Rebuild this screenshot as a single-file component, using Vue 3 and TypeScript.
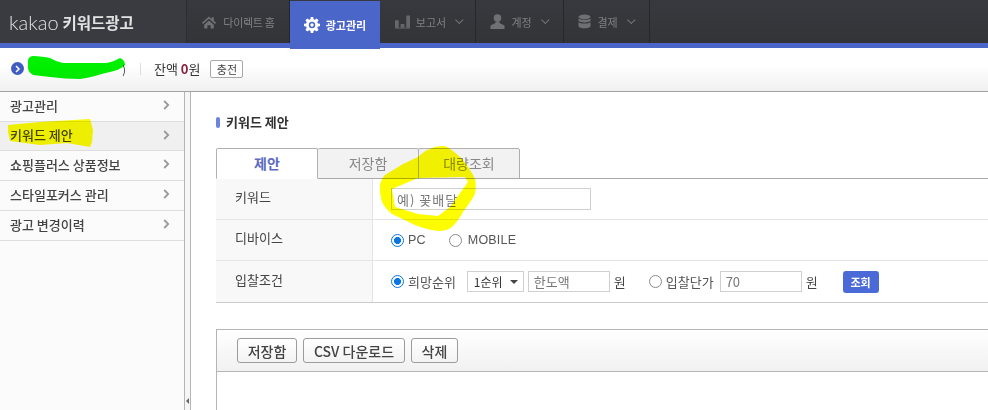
<script setup lang="ts">
const menu: string[] = ['광고관리', '키워드 제안', '쇼핑플러스 상품정보', '스타일포커스 관리', '광고 변경이력']
</script>

<template>
  <div class="page">
    <header class="top">
      <div class="logo"><span class="kakao">kakao</span><b>키워드광고</b></div>
      <nav class="nav">
        <a class="ni n1">
          <svg width="16" height="14" viewBox="0 0 20 16"><path d="M10 1 1 9l1.500 1.600L10 4l7.500 6.600L19 9l-3-2.700V2h-2.500v2.100z" fill="#6f7073"/><path d="M4 11.500 10 6l6 5.500V16h-4v-4H8v4H4z" fill="#6f7073"/></svg>
          다이렉트 홈
        </a>
        <a class="ni active">
          <svg width="16" height="16" viewBox="0 0 16 16"><path d="M6.800 0h2.400l.4 2.200 1.300.5L12.700 1.400l1.900 1.900-1.300 1.800.5 1.300 2.200.4v2.400l-2.200.4-.5 1.300 1.300 1.800-1.900 1.900-1.800-1.300-1.300.5-.4 2.200H6.800l-.4-2.200-1.300-.5-1.800 1.300-1.900-1.900 1.300-1.800-.5-1.300L0 9.200V6.800l2.200-.4.500-1.300-1.300-1.800 1.900-1.900 1.800 1.300 1.300-.5z" fill="#fff"/><circle cx="8" cy="8" r="3.200" fill="#4a66c8"/><circle cx="8" cy="8" r="1.700" fill="#fff"/></svg>
          광고관리
        </a>
        <a class="ni n3">
          <svg width="15" height="14" viewBox="0 0 16 14"><path d="M0 5h4v8H0zM6 9h4v4H6zM12 0h4v13h-4z" fill="#66676a"/><path d="M0 13.500h16" stroke="#66676a"/></svg>
          보고서 <i class="chev"></i>
        </a>
        <a class="ni n4">
          <svg width="15" height="15" viewBox="0 0 15 15"><circle cx="7.500" cy="4" r="3.800" fill="#6f7073"/><path d="M5.500 7.500h4v1.500l5 2.500V15H.5v-3.500l5-2.500z" fill="#6f7073"/></svg>
          계정 <i class="chev"></i>
        </a>
        <a class="ni n5">
          <svg width="13" height="15" viewBox="0 0 14 15"><ellipse cx="7" cy="2.500" rx="6.500" ry="2.500" fill="#6f7073"/><path d="M.5 4.200C2 6 12 6 13.500 4.200V7C12 9 2 9 .5 7zM.5 8.200C2 10 12 10 13.500 8.200V12.500C12 15.600 2 15.600 .5 12.500z" fill="#6f7073"/></svg>
          결제 <i class="chev"></i>
        </a>
      </nav>
    </header>

    <div class="account">
      <span class="dot"><svg width="6" height="8" viewBox="0 0 6 8"><path d="M1 1l3 3-3 3" fill="none" stroke="#fff" stroke-width="1.500"/></svg></span>
      <span class="acct">)</span>
      <span class="vr"></span>
      <span class="bal">잔액 <b>0</b>원</span>
      <button class="charge">충전</button>
    </div>

    <div class="body">
      <aside class="side">
        <a v-for="(m, i) in menu" :key="m" class="si" :class="{ on: i === 1 }">
          {{ m }}
          <svg width="7" height="10" viewBox="0 0 7 10"><path d="M1.200 1l4 4-4 4" fill="none" stroke="#9a9a9a" stroke-width="1.800"/></svg>
        </a>
      </aside>
      <div class="splitter"><i></i></div>
      <main class="main">
        <h2 class="title"><i></i>키워드 제안</h2>
        <div class="tabs">
          <a class="tab cur">제안</a>
          <a class="tab t2">저장함</a>
          <a class="tab t3">대량조회</a>
        </div>
        <div class="form">
          <div class="row">
            <div class="th">키워드</div>
            <div class="td"><input class="kw" placeholder="예) 꽃배달" /></div>
          </div>
          <div class="row">
            <div class="th">디바이스</div>
            <div class="td">
              <span class="radio sel"></span><span class="lab en">PC</span>
              <span class="radio r2"></span><span class="lab en mob">MOBILE</span>
            </div>
          </div>
          <div class="row">
            <div class="th">입찰조건</div>
            <div class="td">
              <span class="radio sel"></span><span class="lab">희망순위</span>
              <span class="sel-box">1순위<i></i></span>
              <input class="amt" placeholder="한도액" />
              <span class="won">원</span>
              <span class="radio r3"></span><span class="lab">입찰단가</span>
              <input class="amt a2" placeholder="70" />
              <span class="won">원</span>
              <button class="go">조회</button>
            </div>
          </div>
        </div>
        <div class="panel">
          <div class="bar">
            <button class="btn b1">저장함</button>
            <button class="btn b2">CSV 다운로드</button>
            <button class="btn b3">삭제</button>
          </div>
        </div>
      </main>
    </div>

    <svg class="scribble" width="988" height="410" viewBox="0 0 988 410">
      <path d="M28 60C29 57 31 56 33 56C39 56 45 57 50 58C54 60 58 62 63 63L107 63C112 62 116 60 120 58C123 59 125 62 125 65C121 69 115 71 110 72C100 74 90 78 80 79C70 79 60 78 50 77L33 75C30 73 28 71 28 68Z" fill="#00f000"/>
      <path d="M8 125 40 122 90 119 93 130 92 142 90 147 67 143 40 145 10 141 8 132Z" fill="#fdfd00"/>
      <path fill-rule="evenodd" fill="#fdfd00" d="M380 185C381 180 383 177 385 175L403 164 418 157C422 153 426 150 430 149C435 146 440 146 445 146C451 149 457 154 462 159C467 165 472 172 475 179C476 184 476 189 475 194C472 200 467 206 463 212C460 218 456 223 452 227C448 230 443 231 438 231C430 230 422 228 415 225L392 214C388 211 384 206 382 202C380 196 380 190 380 185ZM392 189L395 207 418 214 438 216 450 207 468 182 465 177 418 178Z"/>
    </svg>
  </div>
</template>

<style scoped>
.page { position: relative; width: 988px; height: 410px; overflow: hidden; background: #fff; font-family: "Noto Sans CJK KR", "Noto Sans", sans-serif; color: #333; font-size: 12px; }
.top { height: 48px; box-sizing: border-box; display: flex; background: #4a66c8; padding-bottom: 5px; }
.logo { width: 187px; flex: none; display: flex; align-items: center; gap: 4px; padding-left: 9px; box-sizing: border-box; color: #e2e2e2; background: #3a3b40; border-right: 1px solid #2c2d30; }
.kakao { font-family: "Lato", sans-serif; font-size: 20px; font-weight: 300; }
.logo b { font-size: 15.500px; font-weight: 700; }
.nav { flex: 1; display: flex; background: linear-gradient(#38393e, #333438); }
.ni { box-sizing: border-box; display: flex; align-items: center; justify-content: center; gap: 6px; color: #7f8084; font-size: 11px; border-right: 1px solid #26272a; }
.n1 { width: 103px; letter-spacing: -.3px; }
.active { width: 90px; height: 48px; color: #fff; font-weight: 700; background: #4a66c8; border-right: 0; margin-top: 1px; letter-spacing: 0; }
.n3 { width: 96px; padding-left: 3px; }
.n4 { width: 88px; }
.n5 { width: 86px; }
.chev { width: 5px; height: 5px; border-right: 1px solid #77787b; border-bottom: 1px solid #77787b; transform: rotate(45deg) translate(-2px, -1px); margin-left: 5px; }

.account { height: 44px; box-sizing: border-box; display: flex; align-items: center; padding: 0 0 2px 11px; background: linear-gradient(#fff 40%, #f0f0f0); border-bottom: 1px solid #a3a3a3; }
.dot { width: 13px; height: 13px; border-radius: 50%; background: #3f5cc0; display: flex; align-items: center; justify-content: center; }
.acct { width: 102px; text-align: right; font-size: 11px; }
.vr { width: 1px; height: 12px; background: #ddd; margin: 0 13px 0 14px; }
.bal { font-size: 13px; color: #333; }
.bal b { color: #8a1f3c; font-weight: 700; }
.charge { width: 33px; height: 18px; margin-left: 10px; padding: 0; border: 1px solid #a9a9a9; border-radius: 2px; background: #fff; font: 11px "Noto Sans CJK KR", sans-serif; color: #444; }

.body { display: flex; height: 318px; }
.side { width: 184px; flex: none; background: #fbfbfb; }
.si { height: 30px; box-sizing: border-box; display: flex; align-items: center; justify-content: space-between; padding: 0 14px 3px 10px; border-bottom: 1px solid #dedede; font-size: 13px; font-weight: 500; color: #444; }
.on { height: 29px; background: #f0f0f0; }
.splitter { width: 7px; flex: none; box-sizing: border-box; background: #f6f6f6; border-left: 1px solid #b5b5b5; border-right: 1px solid #b5b5b5; position: relative; }
.splitter i { position: absolute; left: 1px; top: 306px; border: 3px solid transparent; border-right-color: #666; border-left: 0; }
.main { flex: 1; padding-left: 25px; min-width: 0; }
.title { margin: 0; height: 56px; box-sizing: border-box; padding-top: 21px; display: flex; align-items: flex-start; font-size: 13px; line-height: 18px; font-weight: 700; color: #333; }
.title i { width: 4px; height: 11px; margin: 4px 6px 0 0; background: #6a84e0; border-radius: 2px; }
.tabs { display: flex; height: 30px; }
.tab { box-sizing: border-box; display: flex; align-items: center; justify-content: center; height: 31px; padding-bottom: 2px; border: 1px solid #b0b0b0; border-radius: 2px 2px 0 0; background: #f2f2f2; color: #888; font-size: 14px; position: relative; }
.cur { width: 102px; background: #fff; color: #5a6bc0; font-weight: 700; z-index: 1; border-bottom-color: #fff; }
.t2 { width: 101px; border-left: 0; }
.t3 { width: 102px; margin-left: -1px; }
.form { border-top: 1px solid #a9a9a9; border-bottom: 1px solid #ccc; position: relative; }
.row { display: flex; height: 41px; box-sizing: border-box; border-bottom: 1px solid #e4e4e4; }
.row:last-child { border-bottom: 0; }
.th { width: 157px; flex: none; box-sizing: border-box; padding: 0 0 5px 19px; display: flex; align-items: center; background: #f8f8f8; border-right: 1px solid #e4e4e4; font-size: 13px; color: #444; }
.td { flex: 1; display: flex; align-items: center; padding-left: 18px; white-space: nowrap; }
.kw { width: 200px; height: 22px; box-sizing: border-box; border: 1px solid #d0d0d0; padding: 0 5px; font: 13px "Noto Sans CJK KR", sans-serif; letter-spacing: 1px; outline: 0; }
.kw::placeholder, .amt::placeholder { color: #777; opacity: 1; }
.radio { width: 13px; height: 13px; flex: none; box-sizing: border-box; border: 1px solid #8a8a8a; border-radius: 50%; background: #fff; }
.sel { border-color: #0a76e4; background: radial-gradient(circle, #0a76e4 3.200px, #fff 3.800px); }
.lab { margin-left: 4px; font-size: 13px; color: #555; }
.en { font-family: "Liberation Sans", sans-serif; font-size: 12.500px; letter-spacing: .2px; }
.mob { margin-left: 6px; }
.r2 { margin-left: 23px; }
.r3 { margin-left: 23px; }
.sel-box { width: 57px; height: 21px; box-sizing: border-box; margin-left: 11px; padding-left: 6px; display: flex; align-items: center; justify-content: space-between; border: 1px solid #d0d0d0; font-size: 12px; color: #333; }
.sel-box i { margin-right: 5px; border: 4px solid transparent; border-top-color: #444; border-bottom: 0; }
.amt { width: 82px; height: 21px; box-sizing: border-box; margin-left: 4px; border: 1px solid #d0d0d0; padding: 0 5px; font: 13px "Noto Sans CJK KR", sans-serif; outline: 0; }
.a2 { margin-left: 6px; }
.won { margin-left: 4px; font-size: 13px; color: #444; }
.go { width: 36px; height: 22px; margin-left: 25px; padding: 0; border: 0; border-radius: 3px; background: #4a6ad8; color: #fff; font: 700 11px "Noto Sans CJK KR", sans-serif; }
.panel { margin-top: 26px; height: 91px; box-sizing: border-box; border-left: 1px solid #b5b5b5; border-top: 1px solid #b5b5b5; }
.bar { height: 42px; box-sizing: border-box; display: flex; align-items: center; gap: 6px; padding: 0 0 0 20px; background: linear-gradient(#fff, #f1f1f1); border-bottom: 1px solid #b5b5b5; }
.btn { height: 25px; padding: 0; border: 1px solid #9c9c9c; border-radius: 3px; background: linear-gradient(#fff, #f3f3f3); font: 500 14px "Noto Sans CJK KR", sans-serif; color: #444; }
.b1 { width: 60px; }
.b2 { width: 102px; }
.b3 { width: 47px; }
.scribble { position: absolute; left: 0; top: 0; pointer-events: none; mix-blend-mode: multiply; }
</style>
